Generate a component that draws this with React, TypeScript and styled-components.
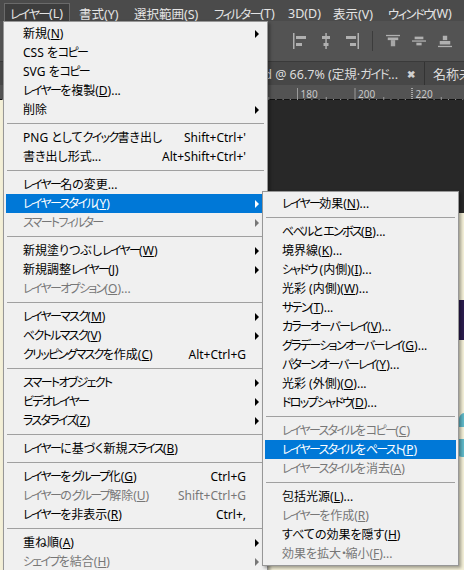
import React from 'react';
import styled, { createGlobalStyle } from 'styled-components';

const Global = createGlobalStyle`
  html, body { margin: 0; padding: 0; background: #282828; overflow: hidden; }
  #root { width: 464px; height: 570px; }
`;

const UI_FONT = `"Noto Sans", "Noto Sans CJK JP", sans-serif`;

const Shell = styled.div`
  position: relative;
  width: 464px;
  height: 570px;
  overflow: hidden;
  display: flex;
  flex-direction: column;
  background: #282828;
  font-family: ${UI_FONT};
  font-feature-settings: "palt";
`;

const Kata = styled.span`
  letter-spacing: -1.7px;
`;

function ja(text: string) {
  const parts = text.split(/([\u30A0-\u30FF]+)/);
  return parts.map((p, i) =>
    /^[\u30A0-\u30FF]+$/.test(p) ? <Kata key={i}>{p}</Kata> : <React.Fragment key={i}>{p}</React.Fragment>
  );
}

const MenuBar = styled.div`
  height: 21px;
  background: #4b4b4b;
  display: flex;
  align-items: stretch;
  padding-left: 4px;
  flex-shrink: 0;
`;

const BarItem = styled.div<{ $open?: boolean; $w: number }>`
  width: ${(p) => p.$w}px;
  flex-shrink: 0;
  display: flex;
  align-items: center;
  padding: 1px 0 0 6px;
  margin-top: 3px;
  margin-right: ${(p) => (p.$open ? 2 : 0)}px;
  font-size: 12.5px;
  color: #e4e4e4;
  white-space: nowrap;
  box-sizing: border-box;
  border: 1px solid ${(p) => (p.$open ? '#6a6a6a' : 'transparent')};
  border-bottom: none;
  background: ${(p) => (p.$open ? '#3d3d3d' : 'transparent')};
  padding-left: ${(p) => (p.$open ? 5 : 6)}px;
`;

const OptionsBar = styled.div`
  height: 40px;
  background: #535353;
  border-bottom: 1px solid #3a3a3a;
  display: flex;
  align-items: center;
  padding-left: 293px;
  gap: 12px;
  flex-shrink: 0;
`;

const IconSlot = styled.div`
  width: 14px;
  height: 16px;
  display: flex;
  align-items: center;
  justify-content: center;
`;

const VSep = styled.div`
  width: 1px;
  height: 20px;
  background: #3c3c3c;
  margin: 0 1px;
`;

const TabBar = styled.div`
  height: 23px;
  background: #474747;
  display: flex;
  align-items: stretch;
  flex-shrink: 0;
`;

const Tab = styled.div<{ $w: number }>`
  width: ${(p) => p.$w}px;
  flex-shrink: 0;
  display: flex;
  align-items: center;
  justify-content: flex-end;
  overflow: hidden;
  white-space: nowrap;
  color: #dcdcdc;
  font-size: 12.5px;
  border-right: 1px solid #333;
  padding-right: 9px;
  gap: 9px;
  box-sizing: border-box;
`;

const TabLabel = styled.span`
  flex-shrink: 0;
`;

const Close = styled.span`
  font-size: 10px;
  color: #cfcfcf;
  font-weight: 700;
`;

const Tab2 = styled.div`
  padding-left: 8px;
  display: flex;
  align-items: center;
  color: #dcdcdc;
  font-size: 13px;
  white-space: nowrap;
`;

const RulerWrap = styled.div`
  height: 14px;
  background: #535353;
  border-bottom: 1px solid #111;
  flex-shrink: 0;
`;

const Workspace = styled.div`
  flex: 1;
  background: #282828;
  display: flex;
  flex-direction: column;
`;

const Doc = styled.div`
  position: relative;
  flex: 1;
  background: #f4f0d8;
`;

const Art = styled.div<{ $x: number; $y: number; $w: number; $h: number; $c: string; $r?: string }>`
  position: absolute;
  left: ${(p) => p.$x}px;
  top: ${(p) => p.$y}px;
  width: ${(p) => p.$w}px;
  height: ${(p) => p.$h}px;
  background: ${(p) => p.$c};
  border-radius: ${(p) => p.$r || '0'};
`;

const Popup = styled.div<{ $x: number; $y: number; $w: number }>`
  position: absolute;
  left: ${(p) => p.$x}px;
  top: ${(p) => p.$y}px;
  width: ${(p) => p.$w}px;
  box-sizing: border-box;
  background: #f0f0f0;
  border: 1px solid #979797;
  padding: 2px;
  box-shadow: 2px 2px 3px rgba(0, 0, 0, 0.35);
  display: flex;
  flex-direction: column;
`;

const Row = styled.div<{ $active?: boolean; $disabled?: boolean }>`
  height: 19px;
  display: flex;
  align-items: center;
  padding: 0 6px 0 17px;
  font-size: 12px;
  line-height: 19px;
  white-space: nowrap;
  background: ${(p) => (p.$active ? '#0078d7' : 'transparent')};
  color: ${(p) => (p.$active ? '#ffffff' : p.$disabled ? '#777777' : '#000000')};
`;

const Label = styled.span`
  flex: 1;
`;

const Shortcut = styled.span`
  margin-right: 9px;
`;

const Arrow = styled.span<{ $color: string }>`
  width: 0;
  height: 0;
  border-top: 4px solid transparent;
  border-bottom: 4px solid transparent;
  border-left: 4px solid ${(p) => p.$color};
`;

const ArrowSpace = styled.span`
  width: 4px;
`;

const Sep = styled.div`
  height: 1px;
  margin: 4px 1px;
  background: #a0a0a0;
`;

type Entry =
  | 'sep'
  | {
      label: string;
      k?: string;
      tail?: string;
      sc?: string;
      sub?: boolean;
      dis?: boolean;
      active?: boolean;
    };

const mainItems: Entry[] = [
  { label: '新規', k: 'N', sub: true },
  { label: 'CSS をコピー' },
  { label: 'SVG をコピー' },
  { label: 'レイヤーを複製', k: 'D', tail: '...' },
  { label: '削除', sub: true },
  'sep',
  { label: 'PNG としてクイック書き出し', sc: "Shift+Ctrl+'" },
  { label: '書き出し形式...', sc: "Alt+Shift+Ctrl+'" },
  'sep',
  { label: 'レイヤー名の変更...' },
  { label: 'レイヤースタイル', k: 'Y', sub: true, active: true },
  { label: 'スマートフィルター', sub: true, dis: true },
  'sep',
  { label: '新規塗りつぶしレイヤー', k: 'W', sub: true },
  { label: '新規調整レイヤー', k: 'J', sub: true },
  { label: 'レイヤーオプション', k: 'O', tail: '...', dis: true },
  'sep',
  { label: 'レイヤーマスク', k: 'M', sub: true },
  { label: 'ベクトルマスク', k: 'V', sub: true },
  { label: 'クリッピングマスクを作成', k: 'C', sc: 'Alt+Ctrl+G' },
  'sep',
  { label: 'スマートオブジェクト', sub: true },
  { label: 'ビデオレイヤー', sub: true },
  { label: 'ラスタライズ', k: 'Z', sub: true },
  'sep',
  { label: 'レイヤーに基づく新規スライス', k: 'B' },
  'sep',
  { label: 'レイヤーをグループ化', k: 'G', sc: 'Ctrl+G' },
  { label: 'レイヤーのグループ解除', k: 'U', sc: 'Shift+Ctrl+G', dis: true },
  { label: 'レイヤーを非表示', k: 'R', sc: 'Ctrl+,' },
  'sep',
  { label: '重ね順', k: 'A', sub: true },
  { label: 'シェイプを結合', k: 'H', sub: true, dis: true },
];

const subItems: Entry[] = [
  { label: 'レイヤー効果', k: 'N', tail: '...' },
  'sep',
  { label: 'ベベルとエンボス', k: 'B', tail: '...' },
  { label: '境界線', k: 'K', tail: '...' },
  { label: 'シャドウ (内側)', k: 'I', tail: '...' },
  { label: '光彩 (内側)', k: 'W', tail: '...' },
  { label: 'サテン', k: 'T', tail: '...' },
  { label: 'カラーオーバーレイ', k: 'V', tail: '...' },
  { label: 'グラデーションオーバーレイ', k: 'G', tail: '...' },
  { label: 'パターンオーバーレイ', k: 'Y', tail: '...' },
  { label: '光彩 (外側)', k: 'O', tail: '...' },
  { label: 'ドロップシャドウ', k: 'D', tail: '...' },
  'sep',
  { label: 'レイヤースタイルをコピー', k: 'C', dis: true },
  { label: 'レイヤースタイルをペースト', k: 'P', active: true },
  { label: 'レイヤースタイルを消去', k: 'A', dis: true },
  'sep',
  { label: '包括光源', k: 'L', tail: '...' },
  { label: 'レイヤーを作成', k: 'R', dis: true },
  { label: 'すべての効果を隠す', k: 'H' },
  { label: '効果を拡大・縮小', k: 'F', tail: '...', dis: true },
];

function MenuList({ items, arrows }: { items: Entry[]; arrows: boolean }) {
  return (
    <>
      {items.map((it, i) => {
        if (it === 'sep') return <Sep key={i} />;
        const arrowColor = it.active ? '#ffffff' : it.dis ? '#777777' : '#000000';
        return (
          <Row key={i} $active={it.active} $disabled={it.dis}>
            <Label>
              {ja(it.label)}
              {it.k && (
                <>
                  (<u>{it.k}</u>)
                </>
              )}
              {it.tail}
            </Label>
            {it.sc && <Shortcut>{it.sc}</Shortcut>}
            {arrows && (it.sub ? <Arrow $color={arrowColor} /> : <ArrowSpace />)}
          </Row>
        );
      })}
    </>
  );
}

const ic = '#b0b0b0';

function AlignIcon({ kind }: { kind: number }) {
  const shapes: Record<number, React.ReactNode> = {
    0: (
      <>
        <rect x="0" y="0" width="1.5" height="16" fill={ic} />
        <rect x="3" y="3" width="10" height="3" fill={ic} />
        <rect x="3" y="10" width="6" height="3" fill={ic} />
      </>
    ),
    1: (
      <>
        <rect x="6.3" y="0" width="1.5" height="16" fill={ic} />
        <rect x="3" y="3" width="8" height="3" fill={ic} />
        <rect x="4.5" y="10" width="5" height="3" fill={ic} />
      </>
    ),
    2: (
      <>
        <rect x="12.5" y="0" width="1.5" height="16" fill={ic} />
        <rect x="1" y="3" width="10" height="3" fill={ic} />
        <rect x="5" y="10" width="6" height="3" fill={ic} />
      </>
    ),
    3: (
      <>
        <rect x="0" y="1" width="16" height="1.5" fill={ic} />
        <rect x="2" y="4" width="12" height="3" fill={ic} />
        <rect x="5.5" y="7" width="5" height="7" fill={ic} opacity="0.9" />
      </>
    ),
    4: (
      <>
        <rect x="0" y="7.3" width="16" height="1.5" fill={ic} />
        <rect x="3" y="3" width="10" height="3" fill={ic} />
        <rect x="5" y="10" width="6" height="3" fill={ic} />
      </>
    ),
    5: (
      <>
        <rect x="0" y="13.5" width="16" height="1.5" fill={ic} />
        <rect x="5.5" y="2" width="5" height="5" fill={ic} />
        <rect x="2" y="8" width="12" height="4" fill={ic} />
      </>
    ),
  };
  const w = kind >= 3 ? 16 : 14;
  return (
    <svg width={w} height="16" viewBox={`0 0 ${w} 16`}>
      {shapes[kind]}
    </svg>
  );
}

function Ruler() {
  const ticks: React.ReactNode[] = [];
  const unit = 57.5;
  const origin = 297 - 9 * unit;
  for (let n = 0; n <= 12; n++) {
    const major = origin + n * unit;
    const val = n * 20;
    for (let s = 0; s < 8; s++) {
      const x = major + (s * unit) / 8;
      if (x < 0 || x > 464) continue;
      const h = s === 0 ? 14 : s === 4 ? 5 : 3;
      if (s === 0 && val === 220) continue;
      ticks.push(<rect key={`${n}-${s}`} x={x} y={14 - h} width="1" height={h} fill="#9a9a9a" />);
    }
    if (major > 0 && major < 464)
      ticks.push(
        <text key={`t${n}`} x={major + 3.5} y="10" fontSize="10" fill="#c8c8c8" fontFamily="Noto Sans, sans-serif">
          {val}
        </text>
      );
  }
  return (
    <svg width="464" height="14" viewBox="0 0 464 14">
      {ticks}
      <line x1="412" y1="0" x2="412" y2="14" stroke="#ffffff" strokeWidth="1" strokeDasharray="1 1" />
    </svg>
  );
}

const menuBar: { t: string; w: number }[] = [
  { t: 'レイヤー(L)', w: 66 },
  { t: '書式(Y)', w: 55 },
  { t: '選択範囲(S)', w: 80 },
  { t: 'フィルター(T)', w: 74 },
  { t: '3D(D)', w: 45 },
  { t: '表示(V)', w: 55 },
  { t: 'ウィンドウ(W)', w: 70 },
];

export default function App() {
  return (
    <Shell>
      <Global />
      <MenuBar>
        {menuBar.map((m, i) => (
          <BarItem key={m.t} $open={i === 0} $w={m.w}>
            {ja(m.t)}
          </BarItem>
        ))}
      </MenuBar>
      <OptionsBar>
        <IconSlot>
          <AlignIcon kind={0} />
        </IconSlot>
        <IconSlot>
          <AlignIcon kind={1} />
        </IconSlot>
        <IconSlot>
          <AlignIcon kind={2} />
        </IconSlot>
        <VSep />
        <IconSlot>
          <AlignIcon kind={3} />
        </IconSlot>
        <IconSlot>
          <AlignIcon kind={4} />
        </IconSlot>
        <IconSlot>
          <AlignIcon kind={5} />
        </IconSlot>
      </OptionsBar>
      <TabBar>
        <Tab $w={425}>
          <TabLabel>{ja('ガイドとグリッド.psd @ 66.7% (定規·ガイド...')}</TabLabel>
          <Close>✖</Close>
        </Tab>
        <Tab2>名称未設定 1</Tab2>
      </TabBar>
      <RulerWrap>
        <Ruler />
      </RulerWrap>
      <Workspace>
        <Doc>
          <Art $x={20} $y={0} $w={444} $h={113} $c="#282828" />
          <Art $x={457} $y={200} $w={10} $h={40} $c="#2b1c4e" />
          <Art $x={459} $y={313} $w={10} $h={14} $c="#5fb8c8" $r="6px 0 0 0" />
          <Art $x={456} $y={339} $w={10} $h={18} $c="#5fb8c8" $r="0 0 0 6px" />
        </Doc>
      </Workspace>
      <Popup $x={3} $y={21} $w={265}>
        <MenuList items={mainItems} arrows />
      </Popup>
      <Popup $x={262} $y={191} $w={197}>
        <MenuList items={subItems} arrows={false} />
      </Popup>
    </Shell>
  );
}
